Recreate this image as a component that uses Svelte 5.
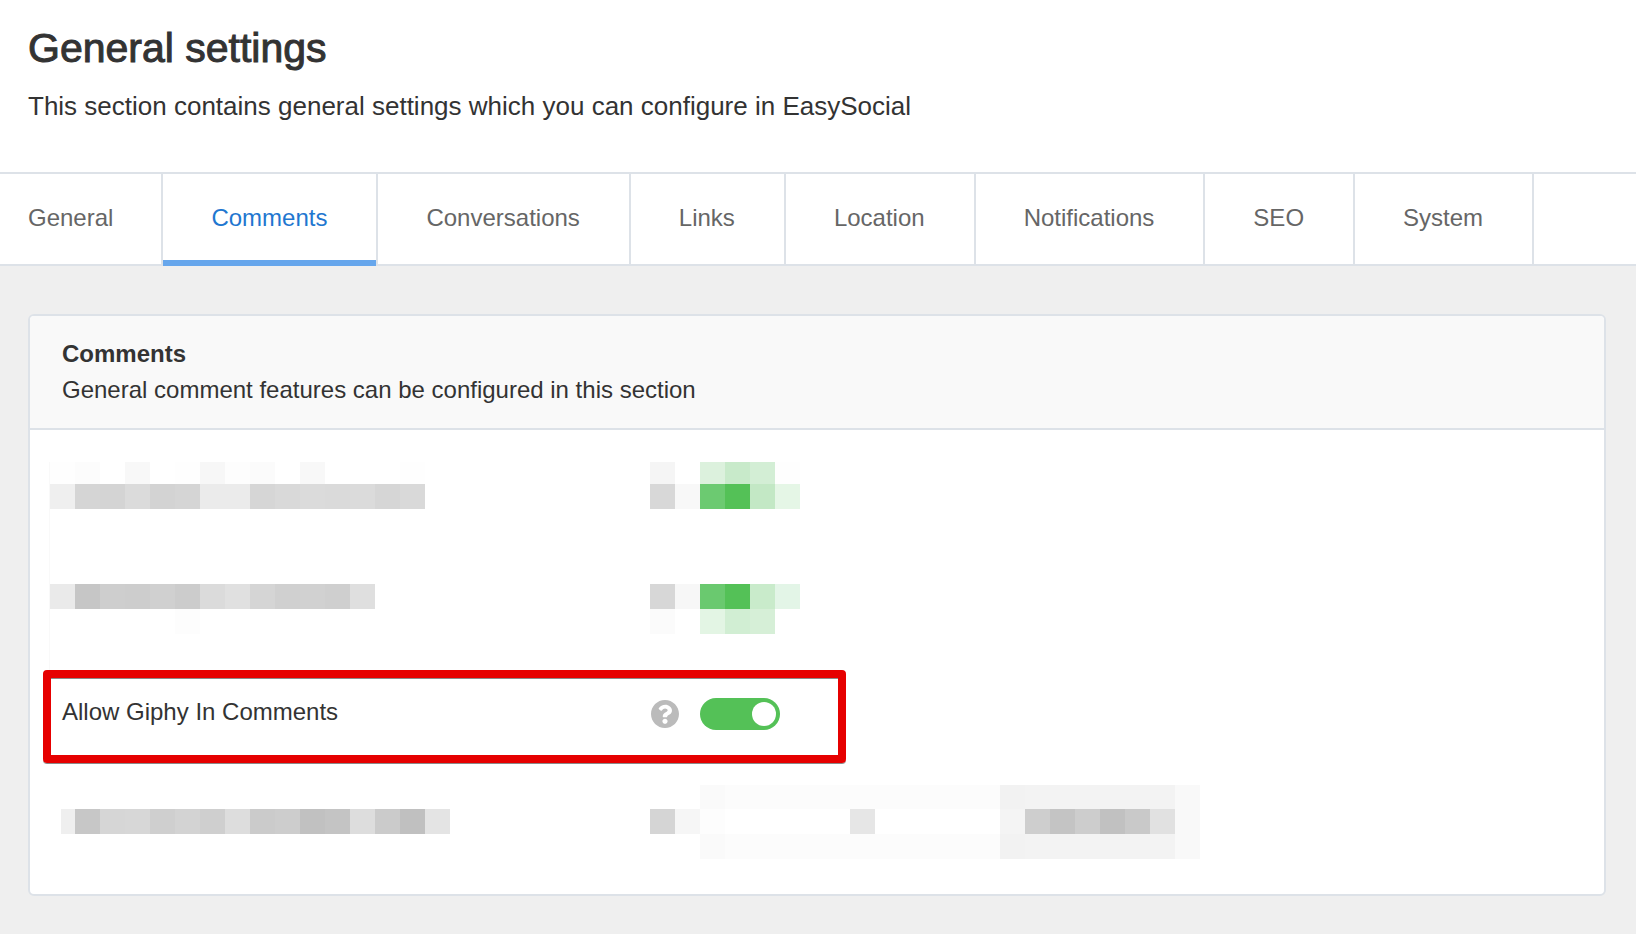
<script lang="ts">
  // General settings page with the Comments tab open. Options that are not
  // relevant here are redacted with coarse pixel blocks.
  type Run = { x: number; y: number; h: number; fills: string[] }

  const CELL = 25

  const tabs = ['General', 'Comments', 'Conversations', 'Links', 'Location', 'Notifications', 'SEO', 'System']
  let active = $state('Comments')
  let giphy = $state(true)

  // An empty fill leaves the cell blank.
  const first: Run[] = [
    { x: 0, y: 0, h: 22, fills: ['#fefefe', '#fcfcfc', '', '#f8f8f8', '', '#fefefe', '#f7f7f7', '#fdfdfd', '#fbfbfb', '', '#f8f8f8', '', '', '', '#fefefe'] },
    { x: 0, y: 22, h: 25, fills: ['#efefef', '#d5d5d5', '#d4d4d4', '#dbdbdb', '#d3d3d3', '#d5d5d5', '#ebebeb', '#ebebeb', '#d6d6d6', '#d9d9d9', '#dbdbdb', '#dadada', '#dbdbdb', '#d6d6d6', '#d9d9d9'] },
    { x: 600, y: 0, h: 22, fills: ['#f5f5f5', '', '#dcf1dd', '#c8eaca', '#d3eed5', '#fefefe'] },
    { x: 600, y: 22, h: 25, fills: ['#d8d8d8', '#f8f8f8', '#6cca71', '#54c157', '#c3e8c5', '#e5f6e6'] },
  ]

  const second: Run[] = [
    { x: 0, y: 0, h: 25, fills: ['#eaeaea', '#c6c6c6', '#cecece', '#cdcdcd', '#d0d0d0', '#cccccc', '#dbdbdb', '#e0e0e0', '#d5d5d5', '#d0d0d0', '#d1d1d1', '#cfcfcf', '#dfdfdf'] },
    { x: 125, y: 25, h: 25, fills: ['#fdfdfd'] },
    { x: 600, y: 0, h: 25, fills: ['#d7d7d7', '#f7f7f7', '#6ac96f', '#54c157', '#c9ebcb', '#e3f5e7'] },
    { x: 600, y: 25, h: 25, fills: ['#fbfbfb', '', '#e3f5e4', '#d1eed3', '#d6efd7'] },
  ]

  const edge = ['#fafafa', ...Array(11).fill('#fcfcfc'), '#f2f2f2', ...Array(6).fill('#f3f3f3'), '#f9f9f9']
  const blank = ['', '', '', '', '']
  const last: Run[] = [
    { x: 25, y: 24, h: 25, fills: ['#c7c7c7', '#d6d6d6', '#d7d7d7', '#cfcfcf', '#d3d3d3', '#cfcfcf', '#dddddd', '#cbcbcb', '#cdcdcd', '#c1c1c1', '#c4c4c4', '#dddddd', '#cbcbcb', '#c0c0c0', '#e4e4e4'] },
    { x: 650, y: 0, h: 24, fills: edge },
    { x: 600, y: 24, h: 25, fills: ['#d5d5d5', '#f6f6f6', '#fdfdfd', ...blank, '#e6e6e6', ...blank, '#f4f4f4', '#cecece', '#c4c4c4', '#cdcdcd', '#c1c1c1', '#c9c9c9', '#e1e1e1', '#f9f9f9'] },
    { x: 650, y: 49, h: 25, fills: edge },
  ]
</script>

{#snippet cells(runs: Run[])}
  {#each runs as run}
    {#each run.fills as fill, i}
      {#if fill}
        <rect x={run.x + i * CELL} y={run.y} width={CELL} height={run.h} {fill} />
      {/if}
    {/each}
  {/each}
{/snippet}

<header>
  <h1>General settings</h1>
  <p>This section contains general settings which you can configure in EasySocial</p>
</header>

<nav>
  {#each tabs as tab (tab)}
    <a
      href="#{tab.toLowerCase()}"
      class:active={tab === active}
      aria-current={tab === active ? 'page' : undefined}
      onclick={() => (active = tab)}>{tab}</a>
  {/each}
</nav>

<main>
  <section class="panel">
    <div class="panel-head">
      <h2>Comments</h2>
      <p>General comment features can be configured in this section</p>
    </div>

    <div class="panel-body">
      <div class="redacted">
        <svg width="1150" height="47" aria-hidden="true">{@render cells(first)}</svg>
        <svg width="1150" height="50" aria-hidden="true">{@render cells(second)}</svg>
      </div>

      <div class="option">
        <label for="giphy">Allow Giphy In Comments</label>
        <button type="button" class="help" aria-label="Help">
          <svg viewBox="8 8 496 496" width="28" height="28" aria-hidden="true">
            <path
              fill="currentColor"
              d="M504 256c0 136.997-111.043 248-248 248S8 392.997 8 256C8 119.083 119.043 8 256 8s248 111.083 248 248zM262.655 90c-54.497 0-89.255 22.957-116.549 63.758-3.536 5.286-2.353 12.415 2.715 16.258l34.699 26.31c5.205 3.947 12.621 3.008 16.665-2.122 17.864-22.658 30.113-35.797 57.303-35.797 20.429 0 45.698 13.148 45.698 32.958 0 14.976-12.363 22.667-32.534 33.976C247.128 238.528 216 254.941 216 296v4c0 6.627 5.373 12 12 12h56c6.627 0 12-5.373 12-12v-1.333c0-28.462 83.186-29.647 83.186-106.667 0-58.002-60.165-102-116.531-102zM256 338c-25.365 0-46 20.635-46 46 0 25.364 20.635 46 46 46s46-20.636 46-46c0-25.364-20.635-46-46-46z"
            />
          </svg>
        </button>
        <input id="giphy" type="checkbox" role="switch" bind:checked={giphy} />
      </div>

      <svg width="1150" height="74" aria-hidden="true">
        <rect x="11" y="24" width="14" height="25" fill="#efefef" />
        {@render cells(last)}
      </svg>
    </div>
  </section>
</main>

<style>
  :global(body) {
    background: #efefef;
    color: #333;
    font-family: "Helvetica Neue", "Liberation Sans", Arial, sans-serif;
    font-size: 24px;
  }
  h1,
  h2,
  p {
    margin: 0;
  }
  header {
    background: #fff;
    padding: 24px 28px 48px;
  }
  h1 {
    font-size: 41px;
    font-weight: 400;
    line-height: 48px;
    margin-bottom: 16px;
    -webkit-text-stroke: 1px #333;
  }
  header p {
    font-size: 26px;
    line-height: 36px;
  }

  nav {
    display: flex;
    background: #fff;
    border-top: 2px solid #dde2e8;
    border-bottom: 2px solid #dde2e8;
  }
  nav a {
    position: relative;
    padding: 28px 49px 30px 48px;
    border-right: 2px solid #dde2e8;
    color: #666;
    line-height: 32px;
    text-decoration: none;
  }
  nav a:first-child {
    padding-left: 28px;
    padding-right: 48px;
  }
  nav a.active {
    color: #1f77d0;
  }
  nav a.active::after {
    content: '';
    position: absolute;
    inset: auto 0 -2px;
    height: 6px;
    background: #66a6ec;
  }

  main {
    padding: 48px 30px 38px 28px;
  }
  .panel {
    background: #fff;
    border: 2px solid #dde2e8;
    border-radius: 6px;
    overflow: hidden;
  }
  .panel-head {
    padding: 20px 32px;
    background: #f9f9f9;
    border-bottom: 2px solid #dde2e8;
    line-height: 36px;
  }
  h2 {
    font-size: 24px;
    font-weight: 700;
  }
  .panel-body {
    padding: 32px 20px 35px;
  }
  .panel-body > svg,
  .redacted svg {
    display: block;
    max-width: 100%;
    shape-rendering: crispEdges;
  }
  .redacted {
    display: grid;
    gap: 75px;
    margin-left: -1px;
    padding-bottom: 36px;
    border-left: 1px solid #f9f9f9;
  }

  .option {
    display: grid;
    grid-template-columns: 1fr 28px 80px;
    column-gap: 21px;
    align-items: center;
    box-sizing: border-box;
    max-width: 803px;
    height: 93px;
    margin: 0 0 22px -7px;
    padding: 0 58px 5px 11px;
    border: 8px solid #e60000;
    border-radius: 4px;
    box-shadow: 0 1px #8a8a8a, inset 0 1px #8a8a8a;
  }
  label {
    padding-bottom: 4px;
    line-height: 32px;
  }
  .help {
    display: flex;
    padding: 0;
    border: 0;
    background: none;
    color: #bbb;
    cursor: pointer;
  }
  input {
    appearance: none;
    width: 80px;
    height: 32px;
    margin: 0;
    padding: 4px;
    box-sizing: border-box;
    border-radius: 16px;
    background: #ccc;
    cursor: pointer;
  }
  input::before {
    content: '';
    display: block;
    width: 24px;
    height: 24px;
    border-radius: 50%;
    background: #fff;
  }
  input:checked {
    background: #54c157;
  }
  input:checked::before {
    margin-left: auto;
  }
</style>
